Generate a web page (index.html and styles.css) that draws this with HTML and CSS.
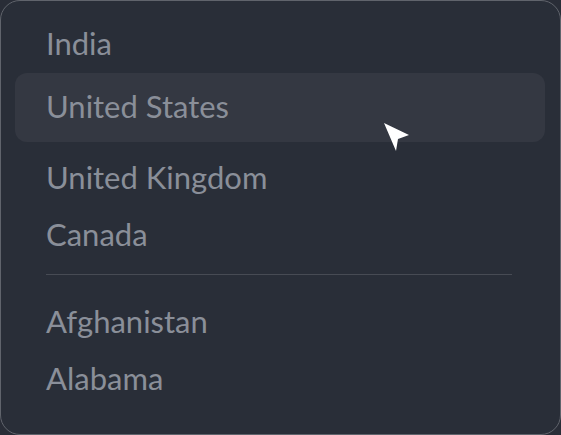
FILE: index.html
```html
<!DOCTYPE html>
<html>
<head>
<meta charset="utf-8">
<link rel="stylesheet" href="styles.css">
</head>
<body>
<div class="menu">
  <ul class="list">
    <li class="item">India</li>
    <li class="item active">United States</li>
    <li class="item spaced">United Kingdom</li>
    <li class="item">Canada</li>
    <li class="divider" role="separator"></li>
    <li class="item">Afghanistan</li>
    <li class="item">Alabama</li>
  </ul>
  <svg class="cursor" width="30" height="32" viewBox="0 0 30 32">
    <polygon points="1,1 26,13 15,17 13,29" fill="#ffffff"/>
  </svg>
</div>
</body>
</html>
```
FILE: styles.css
```css
html, body {
  margin: 0;
  padding: 0;
  background: #292d37;
}
.menu {
  position: relative;
  width: 561px;
  height: 435px;
  box-sizing: border-box;
  border: 1px solid #60646c;
  border-radius: 20px;
  background: #292e38;
  font-family: Lato, "Open Sans", sans-serif;
  overflow: hidden;
}
.list {
  list-style: none;
  margin: 0;
  padding: 15px 15px 0 14px;
}
.item {
  box-sizing: border-box;
  height: 57px;
  display: flex;
  align-items: center;
  padding: 0 0 3px 31px;
  font-size: 31px;
  color: #8a8f99;
  border-radius: 12px;
}
.item.active {
  height: 69px;
  background: #343842;
}
.item.spaced {
  margin-top: 8px;
}
.divider {
  height: 1px;
  background: #474b54;
  margin: 10px 33px 19px 31px;
}
.cursor {
  position: absolute;
  left: 382px;
  top: 121px;
}
```
